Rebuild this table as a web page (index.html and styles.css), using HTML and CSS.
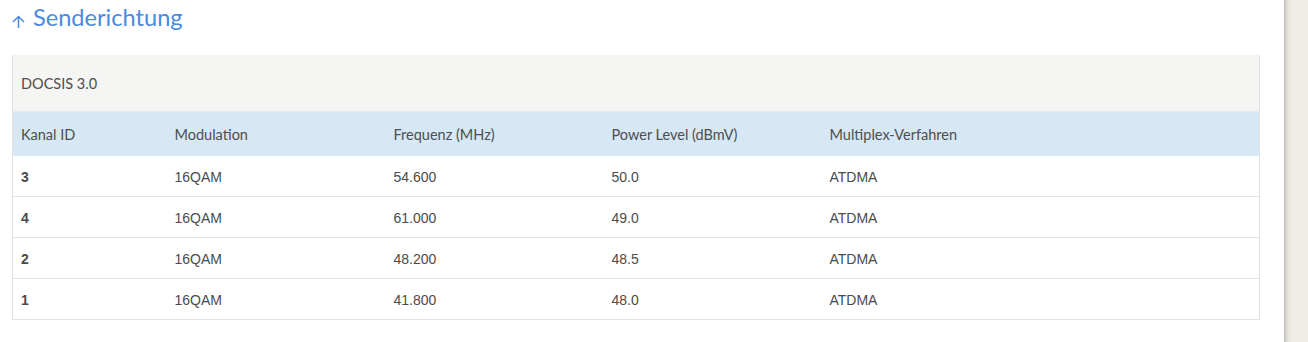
FILE: index.html
```html
<!DOCTYPE html>
<html lang="de">
<head>
<meta charset="utf-8">
<title>Senderichtung</title>
<link rel="stylesheet" href="styles.css">
</head>
<body>
<div class="page">
  <main class="content">
    <h2 class="title"><svg class="arrow" width="13" height="13" viewBox="0 0 13 13" aria-hidden="true"><path d="M6.5 1.5 V13 M1 7 L6.5 1.5 L12 7" fill="none" stroke="#4a8ae0" stroke-width="1.5"/></svg>Senderichtung</h2>
    <table class="tbl">
      <colgroup>
        <col class="c1"><col class="c2"><col class="c3"><col class="c4"><col class="c5">
      </colgroup>
      <thead>
        <tr class="group"><th colspan="5">DOCSIS 3.0</th></tr>
        <tr class="heads">
          <th>Kanal ID</th>
          <th>Modulation</th>
          <th>Frequenz (MHz)</th>
          <th>Power Level (dBmV)</th>
          <th>Multiplex-Verfahren</th>
        </tr>
      </thead>
      <tbody>
        <tr><td class="id">3</td><td>16QAM</td><td>54.600</td><td>50.0</td><td>ATDMA</td></tr>
        <tr><td class="id">4</td><td>16QAM</td><td>61.000</td><td>49.0</td><td>ATDMA</td></tr>
        <tr><td class="id">2</td><td>16QAM</td><td>48.200</td><td>48.5</td><td>ATDMA</td></tr>
        <tr><td class="id">1</td><td>16QAM</td><td>41.800</td><td>48.0</td><td>ATDMA</td></tr>
      </tbody>
    </table>
  </main>
  <aside class="side"></aside>
</div>
</body>
</html>
```
FILE: styles.css
```css
html, body {
  margin: 0;
  padding: 0;
  background: #ffffff;
}
.page {
  display: flex;
  height: 342px;
  overflow: hidden;
}
.content {
  flex: 1;
  padding: 0 24px 0 12px;
}
.side {
  width: 24px;
  background: linear-gradient(to right, #b9b7b1 0, #d9d6cf 2px, #ebe8e1 5px, #efece6 10px, #efece6 100%);
}
.title {
  margin: 0;
  height: 55px;
  padding-top: 3px;
  box-sizing: border-box;
  font-family: Lato, "Liberation Sans", sans-serif;
  font-weight: 400;
  font-size: 23.6px;
  line-height: 29px;
  color: #4a8ae0;
}
.arrow {
  display: inline-block;
  margin-right: 8px;
  vertical-align: -2px;
}
.tbl {
  width: 1248px;
  border-collapse: collapse;
  table-layout: fixed;
  border: 1px solid #e2e2e2;
  border-top: 0;
  color: #4b4b4b;
}
.c1 { width: 154px; }
.c2 { width: 219px; }
.c3 { width: 218px; }
.c4 { width: 218px; }
.tbl th {
  font-family: Lato, "Liberation Sans", sans-serif;
  font-weight: 400;
  font-size: 14.5px;
  text-align: left;
  padding: 0 8px;
  color: #4e4e4e;
}
.group th {
  height: 56px;
  background: #f5f5f3;
  border-bottom: 1px solid #e8e8e8;
}
.heads th {
  height: 44px;
  background: #d6e7f5;
}
.tbl td {
  font-family: "Liberation Sans", Arial, sans-serif;
  font-size: 14px;
  height: 39px;
  padding: 1px 8px 0;
  border-bottom: 1px solid #e2e2e2;
  color: #4b4b4b;
}
.tbl td.id {
  font-weight: 700;
}
```
